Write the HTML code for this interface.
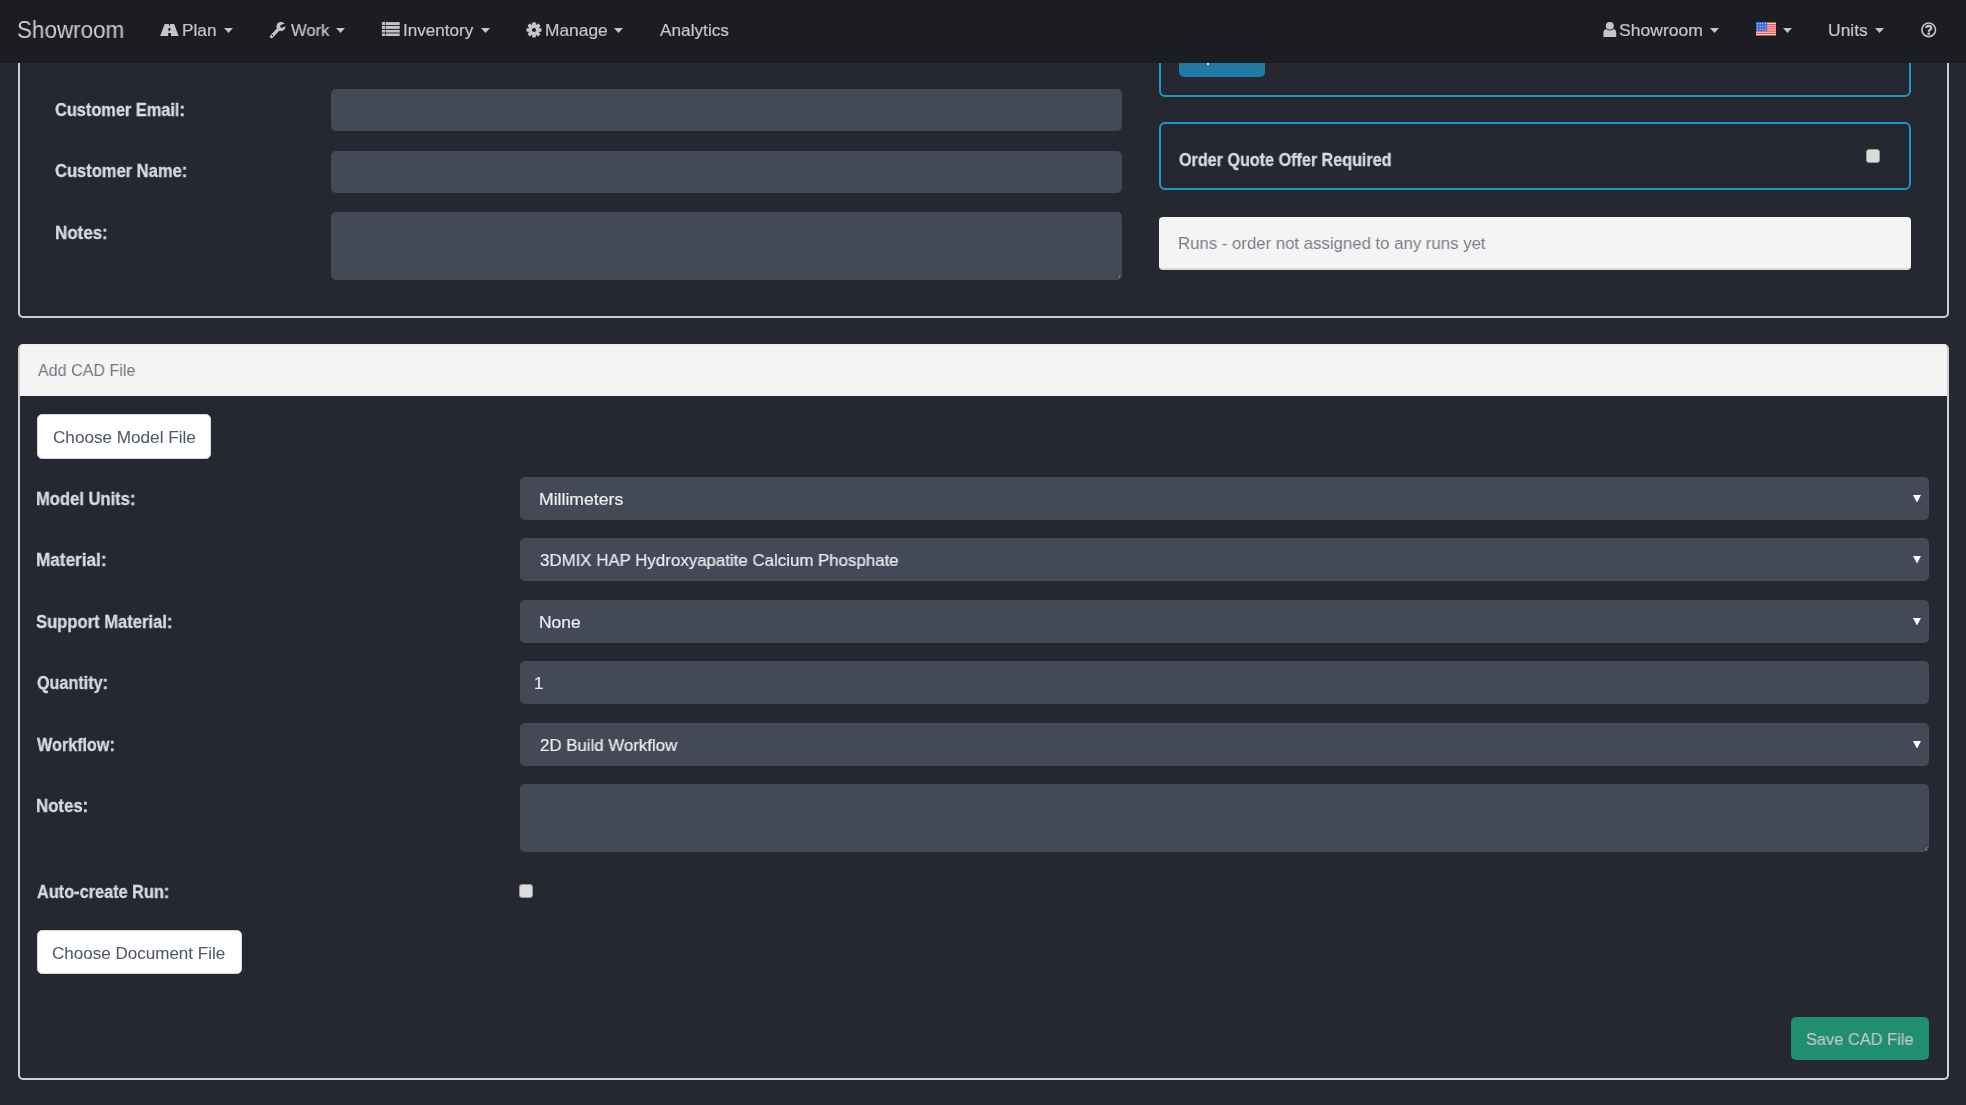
<!DOCTYPE html>
<html><head><meta charset="utf-8"><title>Showroom</title>
<style>
html,body{margin:0;padding:0;width:1966px;height:1105px;overflow:hidden;background:#252831;}
body{position:relative;font-family:"Liberation Sans",sans-serif;}
.t{position:absolute;white-space:nowrap;will-change:transform;}
.b{position:absolute;box-sizing:border-box;}
</style></head><body>
<div class="b" style="left:18px;top:20px;width:1931px;height:298px;border:2px solid #cfcfcf;border-radius:5px;"></div>
<div class="b" style="left:331px;top:89px;width:791px;height:42px;background:#434957;border-radius:5px;"></div>
<div class="b" style="left:331px;top:151px;width:791px;height:42px;background:#434957;border-radius:5px;"></div>
<div class="b" style="left:331px;top:212px;width:791px;height:68px;background:#434957;border-radius:5px;"></div>
<svg class="b" style="left:1116px;top:273px" width="6" height="6" viewBox="0 0 6 6"><circle cx="3.5" cy="0.8" r="0.6" fill="#15171b"/><circle cx="2.3" cy="2.0" r="0.6" fill="#15171b"/><circle cx="1.0" cy="3.3" r="0.6" fill="#15171b"/><circle cx="3.5" cy="2.0" r="0.6" fill="#c9ccd2"/><circle cx="2.3" cy="3.3" r="0.6" fill="#c9ccd2"/><circle cx="3.5" cy="4.5" r="0.6" fill="#c9ccd2"/><circle cx="3.5" cy="3.3" r="0.6" fill="#15171b"/><circle cx="2.3" cy="4.5" r="0.6" fill="#15171b"/></svg>
<div class="t" id="t1" style="left:55.11px;top:102.00px;font-size:17.5px;line-height:17.5px;font-weight:700;color:#d8dbe0;transform:scaleX(0.9342);transform-origin:0 0;-webkit-text-stroke:0.3px #d8dbe0;">Customer Email:</div>
<div class="t" id="t2" style="left:55.11px;top:163.00px;font-size:17.5px;line-height:17.5px;font-weight:700;color:#d8dbe0;transform:scaleX(0.9441);transform-origin:0 0;-webkit-text-stroke:0.3px #d8dbe0;">Customer Name:</div>
<div class="t" id="t3" style="left:54.50px;top:225.00px;font-size:17.5px;line-height:17.5px;font-weight:700;color:#d8dbe0;transform:scaleX(0.9686);transform-origin:0 0;-webkit-text-stroke:0.3px #d8dbe0;">Notes:</div>
<div class="b" style="left:1159px;top:20px;width:752px;height:77px;border:2px solid #1998cb;border-radius:6px;"></div>
<div class="b" style="left:1179px;top:40px;width:86px;height:37px;background:#1f7ba4;border-radius:5px;"></div>
<div class="b" style="left:1207px;top:63px;width:2px;height:2px;background:#d8dde0;"></div>
<div class="b" style="left:1159px;top:122px;width:752px;height:68px;border:2px solid #1998cb;border-radius:6px;"></div>
<div class="t" id="t4" style="left:1178.73px;top:152.00px;font-size:17.5px;line-height:17.5px;font-weight:700;color:#d8dbe0;transform:scaleX(0.9222);transform-origin:0 0;-webkit-text-stroke:0.3px #d8dbe0;">Order Quote Offer Required</div>
<div class="b" style="left:1866px;top:149px;width:14px;height:14px;background:#dcdcdc;border:1px solid #9a9a9a;border-radius:3px;"></div>
<div class="b" style="left:1159px;top:217px;width:752px;height:53px;background:#f4f4f4;border-radius:4px;border-bottom:2px solid #dadada;"></div>
<div class="t" id="t5" style="left:1177.88px;top:235.00px;font-size:17px;line-height:17px;font-weight:400;color:#767c87;transform:scaleX(0.9861);transform-origin:0 0;">Runs - order not assigned to any runs yet</div>
<div class="b" style="left:18px;top:344px;width:1931px;height:736px;border:2px solid #d0d0d2;border-top-color:#ececec;border-radius:5px;background:linear-gradient(#f4f4f4,#f4f4f4) no-repeat 0 0/100% 50px;"></div>
<div class="t" id="t6" style="left:38.01px;top:362.00px;font-size:17px;line-height:17px;font-weight:400;color:#707684;transform:scaleX(0.9461);transform-origin:0 0;">Add CAD File</div>
<div class="b" style="left:37px;top:414px;width:174px;height:45px;background:#fff;border-radius:5px;border:1px solid #d8d8d8;"></div>
<div class="t" id="t7" style="left:52.95px;top:429.00px;font-size:17px;line-height:17px;font-weight:400;color:#4f5869;transform:scaleX(1.0076);transform-origin:0 0;-webkit-text-stroke:0.05px #4f5869;">Choose Model File</div>
<div class="b" style="left:520px;top:477px;width:1409px;height:43px;background:#434957;border-radius:5px;"></div>
<div class="t" id="t8" style="left:35.95px;top:491.00px;font-size:17.5px;line-height:17.5px;font-weight:700;color:#d8dbe0;transform:scaleX(0.9466);transform-origin:0 0;-webkit-text-stroke:0.3px #d8dbe0;">Model Units:</div>
<div class="t" id="t9" style="left:538.87px;top:491.00px;font-size:17px;line-height:17px;font-weight:400;color:#eceef0;transform:scaleX(1.0371);transform-origin:0 0;-webkit-text-stroke:0.2px #eceef0;">Millimeters</div>
<svg class="b" style="left:1913px;top:494.7px" width="8" height="7.5" viewBox="0 0 8 7.5"><polygon points="0,0 8,0 4.0,7.5" fill="#ffffff"/></svg>
<div class="b" style="left:520px;top:538px;width:1409px;height:43px;background:#434957;border-radius:5px;"></div>
<div class="t" id="t10" style="left:35.89px;top:552.00px;font-size:17.5px;line-height:17.5px;font-weight:700;color:#d8dbe0;transform:scaleX(0.9802);transform-origin:0 0;-webkit-text-stroke:0.3px #d8dbe0;">Material:</div>
<div class="t" id="t11" style="left:539.59px;top:552.00px;font-size:17px;line-height:17px;font-weight:400;color:#eceef0;transform:scaleX(0.9919);transform-origin:0 0;-webkit-text-stroke:0.2px #eceef0;">3DMIX HAP Hydroxyapatite Calcium Phosphate</div>
<svg class="b" style="left:1913px;top:555.7px" width="8" height="7.5" viewBox="0 0 8 7.5"><polygon points="0,0 8,0 4.0,7.5" fill="#ffffff"/></svg>
<div class="b" style="left:520px;top:600px;width:1409px;height:43px;background:#434957;border-radius:5px;"></div>
<div class="t" id="t12" style="left:36.49px;top:614.00px;font-size:17.5px;line-height:17.5px;font-weight:700;color:#d8dbe0;transform:scaleX(0.9482);transform-origin:0 0;-webkit-text-stroke:0.3px #d8dbe0;">Support Material:</div>
<div class="t" id="t13" style="left:538.89px;top:614.00px;font-size:17px;line-height:17px;font-weight:400;color:#eceef0;transform:scaleX(1.0269);transform-origin:0 0;-webkit-text-stroke:0.2px #eceef0;">None</div>
<svg class="b" style="left:1913px;top:617.7px" width="8" height="7.5" viewBox="0 0 8 7.5"><polygon points="0,0 8,0 4.0,7.5" fill="#ffffff"/></svg>
<div class="b" style="left:520px;top:661px;width:1409px;height:43px;background:#434957;border-radius:5px;"></div>
<div class="t" id="t14" style="left:36.57px;top:675.00px;font-size:17.5px;line-height:17.5px;font-weight:700;color:#d8dbe0;transform:scaleX(0.9238);transform-origin:0 0;-webkit-text-stroke:0.3px #d8dbe0;">Quantity:</div>
<div class="t" id="t15" style="left:534.40px;top:675.00px;font-size:17px;line-height:17px;font-weight:400;color:#eceef0;-webkit-text-stroke:0.2px #eceef0;">1</div>
<div class="b" style="left:520px;top:723px;width:1409px;height:43px;background:#434957;border-radius:5px;"></div>
<div class="t" id="t16" style="left:37.07px;top:737.00px;font-size:17.5px;line-height:17.5px;font-weight:700;color:#d8dbe0;transform:scaleX(0.9239);transform-origin:0 0;-webkit-text-stroke:0.3px #d8dbe0;">Workflow:</div>
<div class="t" id="t17" style="left:539.59px;top:737.00px;font-size:17px;line-height:17px;font-weight:400;color:#eceef0;transform:scaleX(0.9906);transform-origin:0 0;-webkit-text-stroke:0.2px #eceef0;">2D Build Workflow</div>
<svg class="b" style="left:1913px;top:740.7px" width="8" height="7.5" viewBox="0 0 8 7.5"><polygon points="0,0 8,0 4.0,7.5" fill="#ffffff"/></svg>
<div class="b" style="left:520px;top:784px;width:1409px;height:68px;background:#434957;border-radius:5px;"></div>
<svg class="b" style="left:1923px;top:845px" width="6" height="6" viewBox="0 0 6 6"><circle cx="3.5" cy="0.8" r="0.6" fill="#15171b"/><circle cx="2.3" cy="2.0" r="0.6" fill="#15171b"/><circle cx="1.0" cy="3.3" r="0.6" fill="#15171b"/><circle cx="3.5" cy="2.0" r="0.6" fill="#c9ccd2"/><circle cx="2.3" cy="3.3" r="0.6" fill="#c9ccd2"/><circle cx="3.5" cy="4.5" r="0.6" fill="#c9ccd2"/><circle cx="3.5" cy="3.3" r="0.6" fill="#15171b"/><circle cx="2.3" cy="4.5" r="0.6" fill="#15171b"/></svg>
<div class="t" id="t18" style="left:36.32px;top:798.00px;font-size:17.5px;line-height:17.5px;font-weight:700;color:#d8dbe0;transform:scaleX(0.9589);transform-origin:0 0;-webkit-text-stroke:0.3px #d8dbe0;">Notes:</div>
<div class="t" id="t19" style="left:36.68px;top:884.00px;font-size:17.5px;line-height:17.5px;font-weight:700;color:#d8dbe0;transform:scaleX(0.9320);transform-origin:0 0;-webkit-text-stroke:0.3px #d8dbe0;">Auto-create Run:</div>
<div class="b" style="left:519px;top:884px;width:14px;height:14px;background:#dcdcdc;border:1px solid #9a9a9a;border-radius:3px;"></div>
<div class="b" style="left:37px;top:930px;width:205px;height:44px;background:#fff;border-radius:5px;border:1px solid #d8d8d8;"></div>
<div class="t" id="t20" style="left:52.35px;top:945.00px;font-size:17px;line-height:17px;font-weight:400;color:#4f5869;transform:scaleX(1.0020);transform-origin:0 0;-webkit-text-stroke:0.05px #4f5869;">Choose Document File</div>
<div class="b" style="left:1791px;top:1017px;width:138px;height:43px;background:#1f8f6d;border-radius:5px;"></div>
<div class="t" id="t21" style="left:1806.01px;top:1031.00px;font-size:17px;line-height:17px;font-weight:400;color:#c2c6c4;transform:scaleX(0.9655);transform-origin:0 0;-webkit-text-stroke:0.2px #c2c6c4;">Save CAD File</div>
<div class="b" style="left:0px;top:0px;width:1966px;height:63px;background:#1c1d22;"></div>
<div class="t" id="t22" style="left:16.51px;top:19.00px;font-size:23px;line-height:23px;font-weight:400;color:#cacdd3;transform:scaleX(0.9754);transform-origin:0 0;">Showroom</div>
<div class="t" id="t23" style="left:181.87px;top:22.00px;font-size:17px;line-height:17px;font-weight:400;color:#c3c5cb;transform:scaleX(1.0147);transform-origin:0 0;-webkit-text-stroke:0.2px #c3c5cb;">Plan</div>
<svg class="b" style="left:223.7px;top:28px" width="9" height="5" viewBox="0 0 9 5"><polygon points="0,0 9,0 4.5,5" fill="#c3c5cb"/></svg>
<div class="t" id="t24" style="left:290.60px;top:22.00px;font-size:17px;line-height:17px;font-weight:400;color:#c3c5cb;transform:scaleX(0.9782);transform-origin:0 0;-webkit-text-stroke:0.2px #c3c5cb;">Work</div>
<svg class="b" style="left:335.7px;top:28px" width="9" height="5" viewBox="0 0 9 5"><polygon points="0,0 9,0 4.5,5" fill="#c3c5cb"/></svg>
<div class="t" id="t25" style="left:402.55px;top:22.00px;font-size:17px;line-height:17px;font-weight:400;color:#c3c5cb;transform:scaleX(1.0051);transform-origin:0 0;-webkit-text-stroke:0.2px #c3c5cb;">Inventory</div>
<svg class="b" style="left:481px;top:28px" width="9" height="5" viewBox="0 0 9 5"><polygon points="0,0 9,0 4.5,5" fill="#c3c5cb"/></svg>
<div class="t" id="t26" style="left:544.66px;top:22.00px;font-size:17px;line-height:17px;font-weight:400;color:#c3c5cb;transform:scaleX(1.0202);transform-origin:0 0;-webkit-text-stroke:0.2px #c3c5cb;">Manage</div>
<svg class="b" style="left:613.7px;top:28px" width="9" height="5" viewBox="0 0 9 5"><polygon points="0,0 9,0 4.5,5" fill="#c3c5cb"/></svg>
<div class="t" id="t27" style="left:659.79px;top:22.00px;font-size:17px;line-height:17px;font-weight:400;color:#c3c5cb;transform:scaleX(1.0136);transform-origin:0 0;-webkit-text-stroke:0.2px #c3c5cb;">Analytics</div>
<div class="t" id="t28" style="left:1619.14px;top:22.00px;font-size:17px;line-height:17px;font-weight:400;color:#c3c5cb;transform:scaleX(1.0318);transform-origin:0 0;-webkit-text-stroke:0.2px #c3c5cb;">Showroom</div>
<svg class="b" style="left:1709.5px;top:28px" width="9" height="5" viewBox="0 0 9 5"><polygon points="0,0 9,0 4.5,5" fill="#c3c5cb"/></svg>
<div class="t" id="t29" style="left:1827.89px;top:22.00px;font-size:17px;line-height:17px;font-weight:400;color:#c3c5cb;transform:scaleX(1.0292);transform-origin:0 0;-webkit-text-stroke:0.2px #c3c5cb;">Units</div>
<svg class="b" style="left:1875.3px;top:28px" width="9" height="5" viewBox="0 0 9 5"><polygon points="0,0 9,0 4.5,5" fill="#c3c5cb"/></svg>
<svg class="b" style="left:1782.8px;top:28px" width="9" height="5" viewBox="0 0 9 5"><polygon points="0,0 9,0 4.5,5" fill="#c3c5cb"/></svg>
<svg class="b" style="left:156px;top:18px" width="28" height="24" viewBox="0 0 28 24"><polygon points="8.7,5.9 18.2,5.9 22.6,18 4.1,18" fill="#c3c5cb"/><rect x="12.9" y="5.5" width="1.1" height="2.1" fill="#1c1d22"/><rect x="12.4" y="10" width="1.9" height="2.8" fill="#1c1d22"/><rect x="12.2" y="15" width="2.8" height="3.2" fill="#1c1d22"/></svg>
<svg class="b" style="left:264px;top:18px" width="28" height="24" viewBox="0 0 28 24"><circle cx="16.95" cy="8.5" r="4.5" fill="#c3c5cb"/><line x1="15.2" y1="10.4" x2="7.5" y2="18.6" stroke="#c3c5cb" stroke-width="3.3" stroke-linecap="round"/><rect x="17.3" y="7.0" width="7" height="2.8" fill="#1c1d22" transform="rotate(-22 17.3 8.4)"/><circle cx="17.6" cy="8.5" r="1.4" fill="#1c1d22"/><circle cx="8.4" cy="17.5" r="0.75" fill="#1c1d22"/></svg>
<svg class="b" style="left:378px;top:18px" width="28" height="24" viewBox="0 0 28 24"><rect x="3.9" y="4.1" width="3.3" height="2.9" fill="#c3c5cb"/><rect x="7.8" y="4.1" width="13.9" height="2.9" fill="#c3c5cb"/><rect x="3.9" y="7.9" width="3.3" height="3.0" fill="#c3c5cb"/><rect x="7.8" y="7.9" width="13.9" height="3.0" fill="#c3c5cb"/><rect x="3.9" y="11.9" width="3.3" height="6.1" fill="#c3c5cb"/><rect x="7.8" y="11.9" width="13.9" height="6.1" fill="#c3c5cb"/><rect x="3.9" y="14" width="17.8" height="1.9" fill="#1c1d22" opacity="0.5"/></svg>
<svg class="b" style="left:520px;top:18px" width="28" height="24" viewBox="0 0 28 24"><circle cx="14" cy="11.95" r="5.7" fill="#c3c5cb"/><rect x="12.2" y="4.35" width="3.6" height="15.2" fill="#c3c5cb" transform="rotate(0 14 11.95)" rx="0.8"/><rect x="12.2" y="4.35" width="3.6" height="15.2" fill="#c3c5cb" transform="rotate(45 14 11.95)" rx="0.8"/><rect x="12.2" y="4.35" width="3.6" height="15.2" fill="#c3c5cb" transform="rotate(90 14 11.95)" rx="0.8"/><rect x="12.2" y="4.35" width="3.6" height="15.2" fill="#c3c5cb" transform="rotate(135 14 11.95)" rx="0.8"/><circle cx="14" cy="11.95" r="2.0" fill="#1c1d22"/></svg>
<svg class="b" style="left:1598px;top:18px" width="24" height="24" viewBox="0 0 24 24"><circle cx="11.84" cy="8.1" r="4.0" fill="#c3c5cb"/><path d="M5.4,19.1 L5.4,15.0 Q5.4,11.1 9.2,11.1 L14.5,11.1 Q18.25,11.1 18.25,15.0 L18.25,19.1 Z" fill="#c3c5cb"/><path d="M8.6,11.0 Q11.84,13.4 15.1,11.0" stroke="#1c1d22" stroke-width="0.9" fill="none"/></svg>
<svg class="b" style="left:1756px;top:22px" width="20" height="14" viewBox="0 0 20 14"><rect x="0" y="0" width="20" height="14" fill="#f1dede"/><rect x="0" y="0.000" width="20" height="1.077" fill="#e8403a"/><rect x="0" y="2.154" width="20" height="1.077" fill="#e8403a"/><rect x="0" y="4.308" width="20" height="1.077" fill="#e8403a"/><rect x="0" y="6.462" width="20" height="1.077" fill="#e8403a"/><rect x="0" y="8.615" width="20" height="1.077" fill="#e8403a"/><rect x="0" y="10.769" width="20" height="1.077" fill="#e8403a"/><rect x="0" y="12.923" width="20" height="1.077" fill="#e8403a"/><rect x="0" y="0" width="11.1" height="8.85" fill="#3a6ee0"/><circle cx="1.60" cy="1.60" r="0.55" fill="#e6ecff"/><circle cx="4.20" cy="1.60" r="0.55" fill="#e6ecff"/><circle cx="6.80" cy="1.60" r="0.55" fill="#e6ecff"/><circle cx="9.40" cy="1.60" r="0.55" fill="#e6ecff"/><circle cx="1.60" cy="4.30" r="0.55" fill="#e6ecff"/><circle cx="4.20" cy="4.30" r="0.55" fill="#e6ecff"/><circle cx="6.80" cy="4.30" r="0.55" fill="#e6ecff"/><circle cx="9.40" cy="4.30" r="0.55" fill="#e6ecff"/><circle cx="1.60" cy="7.00" r="0.55" fill="#e6ecff"/><circle cx="4.20" cy="7.00" r="0.55" fill="#e6ecff"/><circle cx="6.80" cy="7.00" r="0.55" fill="#e6ecff"/><circle cx="9.40" cy="7.00" r="0.55" fill="#e6ecff"/></svg>
<svg class="b" style="left:1916px;top:18px" width="26" height="24" viewBox="0 0 26 24"><circle cx="12.7" cy="11.84" r="6.8" stroke="#c3c5cb" stroke-width="1.6" fill="none"/><path d="M10.1,9.9 Q10.5,7.8 12.8,7.8 Q15.3,7.9 15.3,9.9 Q15.2,11.2 13.8,12.0 Q12.8,12.6 12.8,13.7" stroke="#c3c5cb" stroke-width="2.3" fill="none" stroke-linecap="butt"/><rect x="11.55" y="14.5" width="2.5" height="2.3" fill="#c3c5cb"/></svg>
</body></html>
